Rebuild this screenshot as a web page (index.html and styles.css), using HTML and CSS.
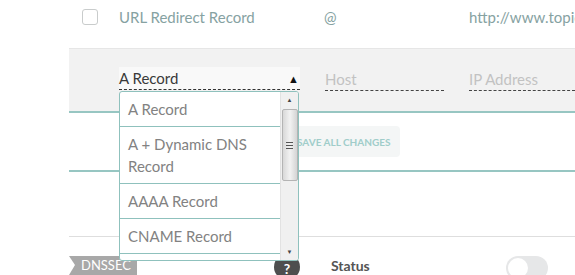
FILE: index.html
```html
<!DOCTYPE html>
<html>
<head>
    <link rel="stylesheet" href="styles.css">
    <title>DNS Records</title>
</head>
<body>
    <div class="records">
        <div class="record-row">
            <span class="cell-check"><span class="checkbox"></span></span>
            <span class="cell-type">URL Redirect Record</span>
            <span class="cell-host">@</span>
            <span class="cell-value">http://www.topic</span>
        </div>

        <div class="edit-row">
            <div class="cell-check"></div>
            <div class="select-wrap">
                <div class="select">
                    <span>A Record</span>
                    <span class="select-arrow">&#9650;</span>
                </div>
                <div class="dropdown">
                    <ul class="dropdown-list">
                        <li>A Record</li>
                        <li>A + Dynamic DNS Record</li>
                        <li>AAAA Record</li>
                        <li>CNAME Record</li>
                        <li>MX Record</li>
                    </ul>
                    <div class="scrollbar">
                        <span class="scroll-up">&#9650;</span>
                        <span class="scroll-thumb"><span class="grip"></span></span>
                        <span class="scroll-down">&#9660;</span>
                    </div>
                </div>
            </div>
            <div class="field field-host">Host</div>
            <div class="field field-ip">IP Address</div>
        </div>

        <div class="actions-row">
            <button class="btn btn-save" type="button">Save all changes</button>
        </div>

        <div class="spacer-row"></div>

        <div class="dnssec-row">
            <span class="tag">DNSSEC</span>
            <span class="help">?</span>
            <span class="status-label">Status</span>
            <span class="toggle"><span class="knob"></span></span>
        </div>
    </div>
</body>
</html>
```

FILE: styles.css
```css
body {
    margin: 0;
    font-family: Lato, "Open Sans", sans-serif;
    font-size: 14px;
    background: #fff;
    overflow: hidden;
}

.records {
    margin-left: 69px;
    width: 506px;
}

.record-row {
    display: grid;
    grid-template-columns: 50px 205px 145px 1fr;
    align-items: center;
    height: 33px;
    padding-bottom: 15px;
    border-bottom: 1px solid #e6e6e6;
    color: #86a2a2;
    font-size: 15px;
    white-space: nowrap;
    overflow: hidden;
}

.checkbox {
    display: block;
    width: 14px;
    height: 14px;
    margin-left: 13px;
    border: 1px solid #c9cccc;
    border-radius: 3px;
}

.edit-row {
    display: grid;
    grid-template-columns: 50px 205px 145px 1fr;
    align-items: start;
    height: 62px;
    background: #f2f2f2;
    border-bottom: 2px solid #97c6c2;
}

.select-wrap {
    position: relative;
    width: 181px;
    margin-top: 18px;
}

.select {
    display: flex;
    justify-content: space-between;
    align-items: center;
    height: 22px;
    background: #f9f9f9;
    border-bottom: 1px dashed #333;
    color: #3a3a3a;
    font-size: 15px;
}

.select-arrow {
    font-size: 11px;
    margin-right: 1px;
    color: #111;
}

.field {
    margin-top: 19px;
    height: 22px;
    line-height: 22px;
    border-bottom: 1px dashed #444;
    color: #c2c2c2;
    font-size: 15px;
}

.field-host {
    width: 119px;
    margin-left: 1px;
}

.dropdown {
    position: absolute;
    top: 24px;
    left: 0;
    z-index: 5;
    display: flex;
    width: 178px;
    height: 168px;
    background: #fff;
    border: 1px solid #8fc1bd;
    border-radius: 3px;
    overflow: hidden;
}

.dropdown-list {
    flex: 1;
    margin: 0;
    padding: 0;
    list-style: none;
}

.dropdown-list li {
    padding: 6px 8px;
    line-height: 22px;
    border-bottom: 1px solid #8fc1bd;
    color: #828282;
    font-size: 15px;
}

.scrollbar {
    display: flex;
    flex-direction: column;
    align-items: center;
    width: 17px;
    background: #f0f0f0;
    border-left: 1px solid #e2e2e2;
}

.scroll-up,
.scroll-down {
    font-size: 6px;
    color: #444;
    height: 16px;
    line-height: 16px;
}

.scroll-thumb {
    display: flex;
    align-items: center;
    justify-content: center;
    width: 14px;
    height: 70px;
    margin-top: 1px;
    border: 1px solid #b4b4b4;
    border-radius: 2px;
    background: linear-gradient(to right, #d8d8d8, #f2f2f2 50%, #d4d4d4);
}

.grip {
    width: 7px;
    height: 7px;
    background: repeating-linear-gradient(#555 0 1px, transparent 1px 3px);
}

.scroll-down {
    margin-top: auto;
}

.actions-row {
    display: flex;
    align-items: center;
    height: 57px;
    padding-left: 218px;
    border-bottom: 2px solid #97c6c2;
}

.btn {
    height: 31px;
    padding: 0 10px;
    border: none;
    border-radius: 4px;
    background: #f4f6f6;
    color: #a0cdca;
    font-family: Lato, sans-serif;
    font-size: 10px;
    font-weight: bold;
    text-transform: uppercase;
}

.spacer-row {
    height: 64px;
    border-bottom: 1px solid #dedede;
}

.dnssec-row {
    display: flex;
    align-items: flex-start;
    height: 37px;
    padding-top: 19px;
}

.tag {
    position: relative;
    height: 19px;
    line-height: 19px;
    padding: 0 6px 0 12px;
    background: #a8a8a8;
    color: #fff;
    font-size: 13px;
}

.tag::before {
    content: "";
    position: absolute;
    left: 0;
    top: 0;
    border-top: 9px solid transparent;
    border-bottom: 10px solid transparent;
    border-left: 6px solid #fff;
}

.help {
    width: 26px;
    height: 26px;
    margin-left: 137px;
    margin-top: -2px;
    border-radius: 50%;
    background: #4e4e4e;
    color: #fff;
    font-weight: bold;
    text-align: center;
    line-height: 30px;
}

.status-label {
    margin-left: 31px;
    color: #555;
    font-weight: bold;
    font-size: 14px;
    line-height: 20px;
}

.toggle {
    display: block;
    position: relative;
    width: 42px;
    height: 24px;
    margin-left: 136px;
    border-radius: 12px;
    background: #e6e7e8;
}

.knob {
    position: absolute;
    left: 2px;
    top: 2px;
    width: 20px;
    height: 20px;
    border-radius: 50%;
    background: #fff;
}
```
